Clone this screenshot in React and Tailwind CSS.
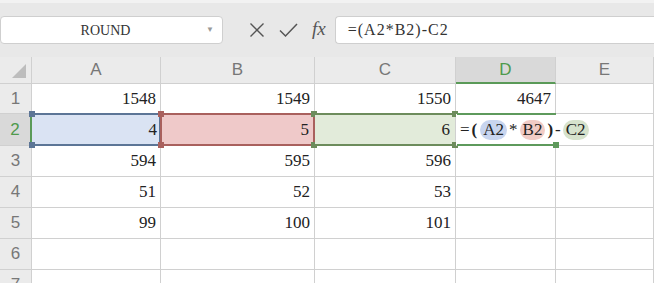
import React from "react";

const serif = { fontFamily: '"Liberation Serif", "DejaVu Serif", serif' };

function Handle({ pos, color }) {
  const map = {
    tl: "-left-[3px] -top-[3px]",
    tr: "-right-[3px] -top-[3px]",
    bl: "-left-[3px] -bottom-[3px]",
    br: "-right-[3px] -bottom-[3px]",
  };
  return <div className={`absolute w-[6px] h-[6px] ${map[pos]}`} style={{ background: color }} />;
}

const cols = ["A", "B", "C", "D", "E"];
const data = [
  ["1548", "1549", "1550", "4647", ""],
  null,
  ["594", "595", "596", "", ""],
  ["51", "52", "53", "", ""],
  ["99", "100", "101", "", ""],
  ["", "", "", "", ""],
  ["", "", "", "", ""],
];

export default function App() {
  return (
    <div className="w-[654px] h-[283px] overflow-hidden bg-white" style={{ fontFamily: '"Liberation Sans", sans-serif' }}>
      {/* toolbar */}
      <div className="h-[57px] bg-[#e8e8e8] border-t-[3px] border-[#f2f2f2] flex items-center">
        <div className="w-[223px] h-[28px] bg-white border border-[#cfcfcf] rounded-[4px] flex items-center relative">
          <div className="flex-1 text-center text-[14px] text-[#333] pl-[4px]" style={serif}>ROUND</div>
          <div className="w-[14px] text-[8px] text-[#999] mr-[2px]">▼</div>
        </div>
        <div className="flex items-center ml-[26px] gap-[14px]">
          <svg width="16" height="16" viewBox="0 0 16 16" className="text-[#555]">
            <path d="M1.5 1.5 L14.5 14.5 M14.5 1.5 L1.5 14.5" stroke="currentColor" strokeWidth="1.4" fill="none" />
          </svg>
          <svg width="19" height="16" viewBox="0 0 19 16" className="text-[#555]">
            <path d="M1 8.5 L6.5 14 L18 2" stroke="currentColor" strokeWidth="1.5" fill="none" />
          </svg>
          <div className="italic text-[19px] text-[#555] leading-none -mt-[4px]" style={serif}>fx</div>
        </div>
        <div className="ml-[9px] flex-1 h-[28px] bg-white border border-[#cfcfcf] rounded-l-[4px] border-r-0 flex items-center pl-[12px] text-[16px] text-[#333] tracking-[1px]" style={serif}>
          =(A2*B2)-C2
        </div>
      </div>

      {/* grid */}
      <div className="grid grid-cols-[32px_129px_154px_141px_100px_98px] grid-rows-[27px_30px_32px_31px_31px_31px_31px_31px]">
        <div className="bg-[#ebebeb] border-r border-b border-[#d0d0d0] relative">
          <svg width="14" height="14" viewBox="0 0 14 14" className="absolute right-[5px] bottom-[5px]">
            <path d="M14 0 L14 14 L0 14 Z" fill="#bdbdbd" />
          </svg>
        </div>
        {cols.map((c) =>
          c === "D" ? (
            <div key={c} className="bg-[#d9d9d9] border-b-2 border-r border-b-[#5a9a58] border-r-[#d0d0d0] flex items-center justify-center text-[17px] text-[#4f9a4c] font-light">
              {c}
            </div>
          ) : (
            <div key={c} className="bg-[#ebebeb] border-r border-b border-[#d0d0d0] flex items-center justify-center text-[17px] text-[#777] font-light">
              {c}
            </div>
          )
        )}

        {data.map((row, ri) => {
          const n = ri + 1;
          if (row === null) {
            return (
              <React.Fragment key={n}>
                <div className="bg-[#d9d9d9] border-r-2 border-b border-r-[#5a9a58] border-b-[#d0d0d0] flex items-center justify-center text-[17px] text-[#4f9a4c] font-light">
                  2
                </div>
                <div className="relative bg-[#dae3f3] border-r border-b border-[#d0d0d0]">
                  <div className="absolute -top-[1px] -left-[1px] right-[-1px] bottom-[-1px] border-2 border-[#5c7596] border-l-0" />
                  <Handle pos="tl" color="#5c7596" />
                  <Handle pos="bl" color="#5c7596" />
                  <div className="absolute inset-0 flex items-center justify-end pr-[3px] text-[17px] text-[#222]" style={serif}>4</div>
                </div>
                <div className="relative bg-[#efc9c9] border-r border-b border-[#d0d0d0]">
                  <div className="absolute -top-[1px] -left-[1px] right-[-1px] bottom-[-1px] border-2 border-[#a9605d]" />
                  <Handle pos="tl" color="#a9605d" />
                  <Handle pos="bl" color="#a9605d" />
                  <Handle pos="tr" color="#6d8c5c" />
                  <Handle pos="br" color="#6d8c5c" />
                  <div className="absolute inset-0 flex items-center justify-end pr-[5px] text-[17px] text-[#222]" style={serif}>5</div>
                </div>
                <div className="relative bg-[#e2ebda] border-r border-b border-[#d0d0d0]">
                  <div className="absolute -top-[1px] left-0 right-[-1px] bottom-[-1px] border-y-2 border-[#6d8c5c]" />
                  <Handle pos="tr" color="#6d8c5c" />
                  <Handle pos="br" color="#6d8c5c" />
                  <div className="absolute inset-0 flex items-center justify-end pr-[5px] text-[17px] text-[#222]" style={serif}>6</div>
                </div>
                <div className="relative bg-white border-b border-[#d0d0d0] z-10">
                  <div className="absolute -top-[1px] left-[1px] right-0 bottom-[-1px] border-y-2 border-[#5e9a5c]" />
                  <Handle pos="br" color="#5e9a5c" />
                  <div className="absolute left-[1px] top-[1px] bottom-[1px] w-[130px] flex items-center pl-[3px] text-[17px] text-[#222] whitespace-nowrap" style={serif}>
                    <span>=</span>
                    <span className="font-bold ml-[2px]">(</span>
                    <span className="ml-[3px] bg-[#c8d5ef] rounded-full px-[3px] leading-[20px]">A2</span>
                    <span className="mx-[2px]">*</span>
                    <span className="bg-[#f1cbc5] rounded-full px-[3px] leading-[20px]">B2</span>
                    <span className="w-px h-[19px] bg-black" />
                    <span className="font-bold ml-[2px]">)</span>
                    <span className="mx-[2px]">-</span>
                    <span className="bg-[#d6e2cc] rounded-full px-[3px] leading-[20px]">C2</span>
                  </div>
                </div>
                <div className="border-r border-b border-[#d0d0d0]" />
              </React.Fragment>
            );
          }
          return (
            <React.Fragment key={n}>
              <div className="bg-[#ebebeb] border-r border-b border-[#d0d0d0] flex items-center justify-center text-[17px] text-[#777] font-light">
                {n}
              </div>
              {row.map((v, ci) => (
                <div
                  key={ci}
                  className="border-r border-b border-[#d0d0d0] flex items-center justify-end pr-[4px] text-[17px] text-[#222]"
                  style={serif}
                >
                  {v}
                </div>
              ))}
            </React.Fragment>
          );
        })}
      </div>
    </div>
  );
}
